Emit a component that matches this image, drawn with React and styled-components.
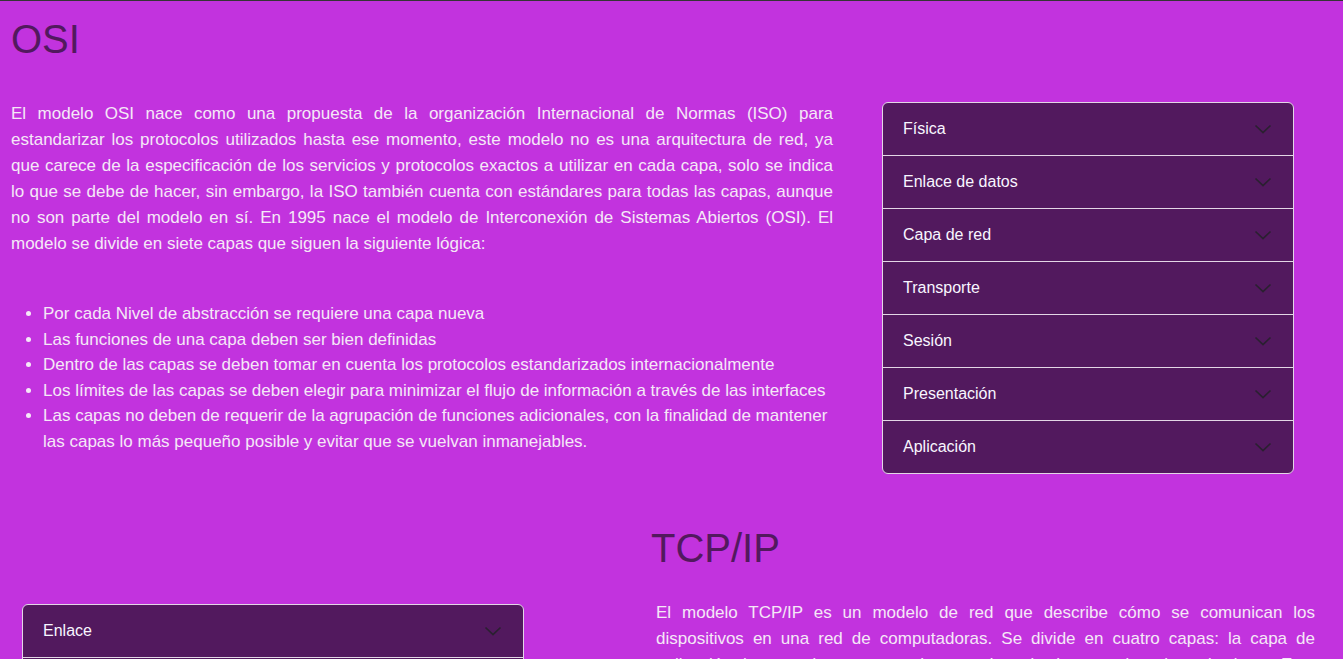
import React from "react";
import styled, { createGlobalStyle } from "styled-components";

const Global = createGlobalStyle`
  html, body { margin: 0; padding: 0; }
  body {
    background: #c233de;
    border-top: 1px solid #353535;
    font-family: "Liberation Sans", Arial, sans-serif;
    color: #f5e8f7;
    min-height: 658px;
  }
  * { box-sizing: border-box; }
`;

const Page = styled.main`
  display: flex;
  flex-direction: column;
`;

const Title = styled.h1`
  margin: 0;
  font-size: 40px;
  line-height: 48px;
  font-weight: 400;
  color: #52195e;
`;

const OsiHeader = styled.header`
  padding: 14px 0 0 11px;
`;

const OsiGrid = styled.section`
  display: grid;
  grid-template-columns: 1fr 412px;
  column-gap: 49px;
  padding: 38px 49px 0 11px;
  align-items: start;
`;

const Text = styled.p`
  margin: 0;
  font-size: 17px;
  line-height: 26px;
  text-align: justify;
  padding-left: ${(p) => p.$indent || 0}px;
`;

const List = styled.ul`
  margin: 44px 0 0;
  padding-left: 32px;
  font-size: 17px;
  line-height: 25.5px;
`;

const Accordion = styled.div`
  background: #52195e;
  border: 1px solid #e3d6e6;
  border-radius: 6px;
  overflow: hidden;
  margin-top: ${(p) => p.$top || 0}px;
`;

const Item = styled.div`
  & + & { border-top: 1px solid #e3d6e6; }
`;

const Button = styled.button`
  display: flex;
  align-items: center;
  justify-content: space-between;
  width: 100%;
  padding: 16px 20px;
  background: transparent;
  border: 0;
  color: #f8f6ff;
  font-family: "Liberation Sans", Arial, sans-serif;
  font-size: 16px;
  line-height: 20px;
  text-align: left;
  cursor: pointer;
`;

const Chevron = styled.svg`
  width: 20px;
  height: 20px;
  flex-shrink: 0;
`;

const TcpGrid = styled.section`
  display: grid;
  grid-template-columns: 502px 1fr;
  grid-template-areas: ". title" "acc text";
  column-gap: 127px;
  padding: 50px 28px 0 22px;
  align-items: start;
`;

const TitleCell = styled.div`
  grid-area: title;
`;

const AccCell = styled.div`
  grid-area: acc;
`;

const TextCell = styled.div`
  grid-area: text;
  padding-top: 28px;
`;

const ChevronIcon = () => (
  <Chevron viewBox="0 0 20 20" fill="none">
    <path d="M2.5 6.5L10 13.5L17.5 6.5" stroke="#2a2030" strokeWidth="1.7" />
  </Chevron>
);

const AccordionList = ({ items, top }) => (
  <Accordion $top={top}>
    {items.map((t) => (
      <Item key={t}>
        <Button>
          <span>{t}</span>
          <ChevronIcon />
        </Button>
      </Item>
    ))}
  </Accordion>
);

const osiLayers = [
  "Física",
  "Enlace de datos",
  "Capa de red",
  "Transporte",
  "Sesión",
  "Presentación",
  "Aplicación",
];

const tcpLayers = ["Enlace", "Internet", "Transporte", "Aplicación"];

export default function App() {
  return (
    <Page>
      <Global />
      <OsiHeader>
        <Title>OSI</Title>
      </OsiHeader>
      <OsiGrid>
        <div>
          <Text>
            El modelo OSI nace como una propuesta de la organización Internacional de Normas (ISO) para
            estandarizar los protocolos utilizados hasta ese momento, este modelo no es una arquitectura de red, ya
            que carece de la especificación de los servicios y protocolos exactos a utilizar en cada capa, solo se indica
            lo que se debe de hacer, sin embargo, la ISO también cuenta con estándares para todas las capas, aunque
            no son parte del modelo en sí. En 1995 nace el modelo de Interconexión de Sistemas Abiertos (OSI). El
            modelo se divide en siete capas que siguen la siguiente lógica:
          </Text>
          <List>
            <li>Por cada Nivel de abstracción se requiere una capa nueva</li>
            <li>Las funciones de una capa deben ser bien definidas</li>
            <li>Dentro de las capas se deben tomar en cuenta los protocolos estandarizados internacionalmente</li>
            <li>Los límites de las capas se deben elegir para minimizar el flujo de información a través de las interfaces</li>
            <li>
              Las capas no deben de requerir de la agrupación de funciones adicionales, con la finalidad de mantener
              las capas lo más pequeño posible y evitar que se vuelvan inmanejables.
            </li>
          </List>
        </div>
        <AccordionList items={osiLayers} top={1} />
      </OsiGrid>
      <TcpGrid>
        <TitleCell>
          <Title>TCP/IP</Title>
        </TitleCell>
        <AccCell>
          <AccordionList items={tcpLayers} top={32} />
        </AccCell>
        <TextCell>
          <Text $indent={5}>
            El modelo TCP/IP es un modelo de red que describe cómo se comunican los dispositivos en una red de
            computadoras. Se divide en cuatro capas: la capa de aplicación, la capa de transporte, la capa de red y la
            capa de enlace de datos. Esta división permite que cada capa se encargue de una función específica en la
            comunicación entre los dispositivos.
          </Text>
        </TextCell>
      </TcpGrid>
    </Page>
  );
}
